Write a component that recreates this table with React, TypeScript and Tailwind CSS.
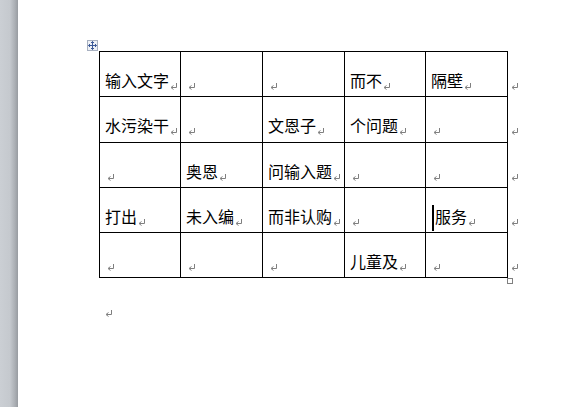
import React from "react";

const Mark = ({ className = "" }: { className?: string }) => (
  <svg width="8" height="7" viewBox="0 0 8 7" className={"block shrink-0 " + className}>
    <path d="M6.5 0 V4.5 H1.5" fill="none" stroke="#7f7f7f" strokeWidth="1" />
    <path d="M3.5 2.5 L1 4.5 L3.5 6.5" fill="none" stroke="#7f7f7f" strokeWidth="1" />
  </svg>
);

const rows: string[][] = [
  ["输入文字", "", "", "而不", "隔壁"],
  ["水污染干", "", "文恩子", "个问题", ""],
  ["", "奥恩", "问输入题", "", ""],
  ["打出", "未入编", "而非认购", "", "服务"],
  ["", "", "", "儿童及", ""],
];

const rowHeights = ["h-[44px]", "h-[45px]", "h-[44px]", "h-[44px]", "h-[44px]"];

export default function App() {
  return (
    <div className="flex h-[407px] w-[572px] overflow-hidden bg-white font-['Noto_Sans_CJK_SC','Noto_Sans_CJK_JP',sans-serif] text-[16px] leading-[16px] text-black">
      <div className="h-full w-[18px] shrink-0 bg-[linear-gradient(to_right,#cbcfd4_0%,#c5c9ce_55%,#aeb2b7_80%,#989ca1_100%)]" />
      <div className="flex flex-col pl-[81px] pt-[51px]">
        <div className="flex">
          <div className="relative">
            <div className="absolute left-[-12px] top-[-11px] flex h-[11px] w-[11px] items-center justify-center border border-[#a7b0c0] bg-[#eef1f6]">
              <svg width="9" height="9" viewBox="0 0 9 9">
                <path d="M4.5 0.5 V8.5 M0.5 4.5 H8.5" stroke="#3b5998" strokeWidth="1" />
                <path d="M3 2 L4.5 0.5 L6 2 M3 7 L4.5 8.5 L6 7 M2 3 L0.5 4.5 L2 6 M7 3 L8.5 4.5 L7 6" fill="none" stroke="#3b5998" strokeWidth="1" />
              </svg>
            </div>
            <div className="grid grid-cols-[80px_81px_81px_80px_81px] grid-rows-[44px_45px_44px_44px_44px] gap-px bg-black p-px">
              {rows.map((row, r) =>
                row.map((txt, c) => {
                  const cursor = r === 3 && c === 4;
                  return (
                    <div
                      key={r + "-" + c}
                      className={"relative flex items-start bg-white pt-[20px] " + (cursor ? "pl-[9px]" : "pl-[5px]")}
                    >
                      {cursor && <div className="absolute left-[6px] top-[17px] h-[26px] w-[2px] bg-black" />}
                      {txt && <span className="whitespace-nowrap">{txt}</span>}
                      <Mark className={txt ? "ml-[1px] mt-[11px]" : "ml-[2px] mt-[11px]"} />
                    </div>
                  );
                })
              )}
            </div>
            <div className="absolute bottom-[-6px] right-[-5px] h-[6px] w-[6px] border border-[#808080] bg-white" />
          </div>
          <div className="ml-[3px] flex flex-col pt-px">
            {rowHeights.map((h, i) => (
              <div key={i} className={h + " mb-px pt-[31px]"}>
                <Mark />
              </div>
            ))}
          </div>
        </div>
        <div className="pl-[6px] pt-[32px]">
          <Mark />
        </div>
      </div>
    </div>
  );
}
